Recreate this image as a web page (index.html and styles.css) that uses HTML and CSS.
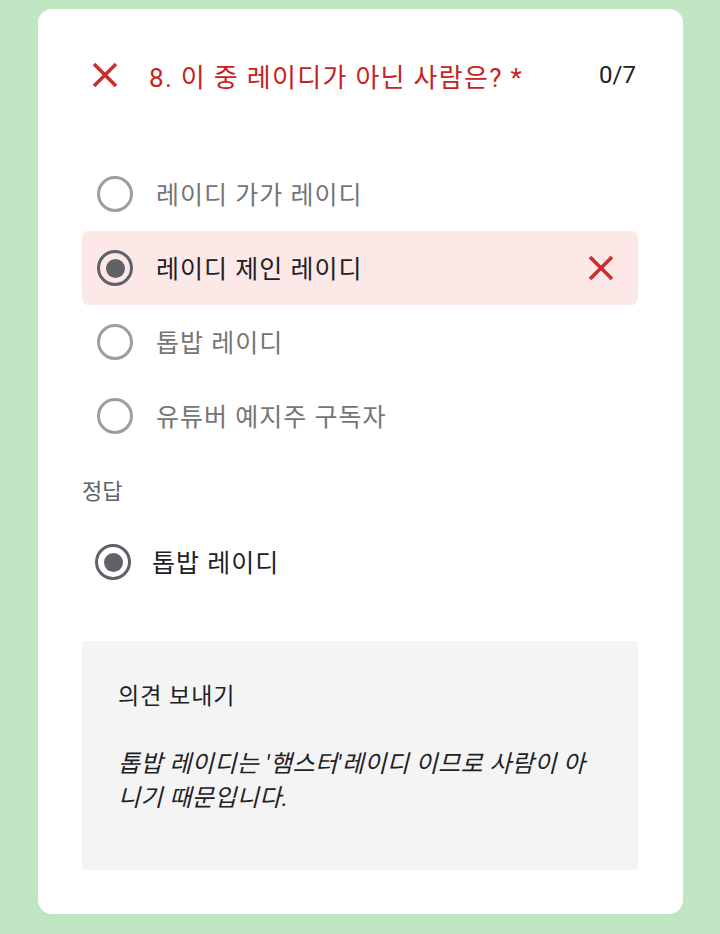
FILE: index.html
```html
<!DOCTYPE html>
<html lang="ko">
<head>
<meta charset="utf-8">
<link rel="stylesheet" href="styles.css">
</head>
<body>
<div class="card">
  <div class="header">
    <svg class="x-icon" viewBox="0 0 26 26"><path d="M2 2 L24 24 M24 2 L2 24" /></svg>
    <div class="title">8. 이 중 레이디가 아닌 사람은? *</div>
    <div class="score">0/7</div>
  </div>

  <div class="options">
    <div class="option">
      <span class="radio"></span>
      <span class="label muted">레이디 가가 레이디</span>
    </div>
    <div class="option wrong">
      <span class="radio checked"></span>
      <span class="label">레이디 제인 레이디</span>
      <svg class="x-icon small" viewBox="0 0 26 26"><path d="M2 2 L24 24 M24 2 L2 24" /></svg>
    </div>
    <div class="option">
      <span class="radio"></span>
      <span class="label muted">톱밥 레이디</span>
    </div>
    <div class="option">
      <span class="radio"></span>
      <span class="label muted">유튜버 예지주 구독자</span>
    </div>
  </div>

  <div class="answer-title">정답</div>
  <div class="answer">
    <span class="radio checked"></span>
    <span class="label">톱밥 레이디</span>
  </div>

  <div class="feedback">
    <div class="feedback-title">의견 보내기</div>
    <div class="feedback-text">톱밥 레이디는 '햄스터'레이디 이므로 사람이 아니기 때문입니다.</div>
  </div>
</div>
</body>
</html>
```

FILE: styles.css
```css
html, body {
  margin: 0;
  padding: 0;
}
body {
  background: #c0e5c3;
  font-family: Roboto, "Noto Sans CJK KR", sans-serif;
  color: #202124;
  height: 934px;
  overflow: hidden;
}
.card {
  box-sizing: border-box;
  margin: 9px 0 0 38px;
  width: 645px;
  height: 905px;
  background: #fff;
  border-radius: 14px;
  padding: 40px 45px 45px 44px;
}
.header {
  display: flex;
  align-items: center;
  height: 52px;
}
.x-icon {
  width: 26px;
  height: 26px;
  flex: none;
  fill: none;
  stroke: #c9302c;
  stroke-width: 3.6;
}
.header .x-icon {
  margin-left: 10px;
  margin-right: 31px;
}
.title {
  flex: 1;
  color: #c5221f;
  font-size: 26px;
  letter-spacing: 1.3px;
}
.score {
  font-size: 24px;
  color: #202124;
  margin-right: 2px;
}
.options {
  margin-top: 56px;
  display: flex;
  flex-direction: column;
}
.option {
  display: flex;
  align-items: center;
  height: 74px;
  padding-left: 15px;
  padding-right: 24px;
  border-radius: 6px;
}
.option.wrong {
  background: #fce8e6;
}
.option .label {
  flex: 1;
  margin-left: 23px;
}
.radio {
  box-sizing: border-box;
  width: 36px;
  height: 36px;
  border-radius: 50%;
  border: 3px solid #9e9e9e;
  flex: none;
  display: flex;
  align-items: center;
  justify-content: center;
}
.radio.checked {
  border: 3.5px solid #5f6368;
}
.radio.checked::after {
  content: "";
  width: 19px;
  height: 19px;
  border-radius: 50%;
  background: #5f6368;
}
.label {
  font-size: 25px;
  letter-spacing: 1px;
  color: #202124;
  padding-bottom: 3px;
}
.label.muted {
  color: #757575;
}
.answer-title {
  margin-top: 23px;
  font-size: 22px;
  color: #5f6368;
  height: 32px;
  line-height: 32px;
}
.answer {
  display: flex;
  align-items: center;
  height: 74px;
  margin-top: 17px;
  padding-left: 13px;
}
.answer .label {
  margin-left: 21px;
}
.feedback {
  margin-top: 42px;
  background: #f4f4f5;
  height: 229px;
  box-sizing: border-box;
  padding: 40px 50px 0 36px;
}
.feedback-title {
  font-size: 23px;
  letter-spacing: 1px;
  color: #202124;
  line-height: 32px;
}
.feedback-text {
  margin-top: 34px;
  font-size: 24px;
  letter-spacing: 0.4px;
  font-style: italic;
  line-height: 34px;
  color: #202124;
}
```
